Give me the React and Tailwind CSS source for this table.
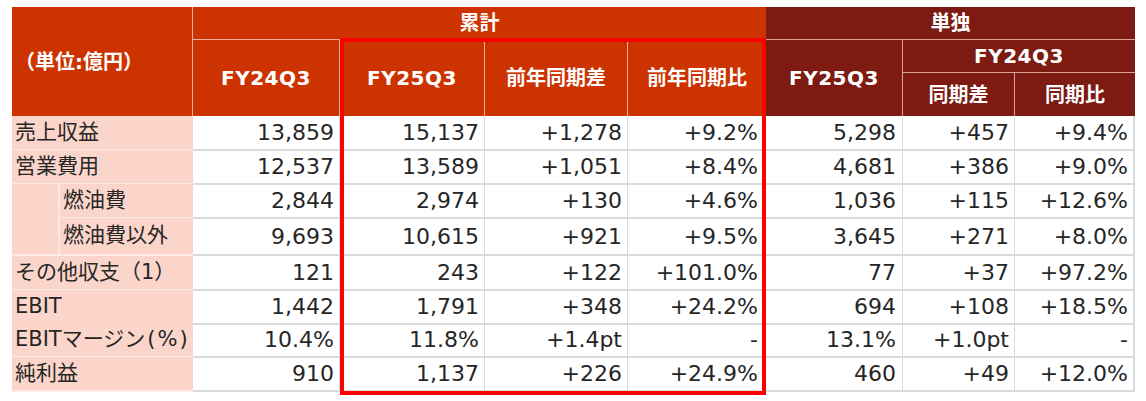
import React from "react";

const rows = [
  { label: "売上収益", sub: false, v: ["13,859", "15,137", "+1,278", "+9.2%", "5,298", "+457", "+9.4%"] },
  { label: "営業費用", sub: false, v: ["12,537", "13,589", "+1,051", "+8.4%", "4,681", "+386", "+9.0%"] },
  { label: "燃油費", sub: true, v: ["2,844", "2,974", "+130", "+4.6%", "1,036", "+115", "+12.6%"] },
  { label: "燃油費以外", sub: true, v: ["9,693", "10,615", "+921", "+9.5%", "3,645", "+271", "+8.0%"] },
  { label: "その他収支（1）", sub: false, v: ["121", "243", "+122", "+101.0%", "77", "+37", "+97.2%"] },
  { label: "EBIT", sub: false, v: ["1,442", "1,791", "+348", "+24.2%", "694", "+108", "+18.5%"] },
  { label: "EBITマージン", suffix: true, sub: false, v: ["10.4%", "11.8%", "+1.4pt", "-", "13.1%", "+1.0pt", "-"] },
  { label: "純利益", sub: false, v: ["910", "1,137", "+226", "+24.9%", "460", "+49", "+12.0%"] },
];

const rowHeights = [34, 34, 34, 38, 34, 33, 34, 34];

export default function App() {
  const font = { fontFamily: '"DejaVu Sans", "Noto Sans CJK JP", sans-serif' };
  const hdr = "flex items-center justify-center text-white font-bold text-[20px] leading-none";
  const cols = "grid-cols-[48px_133px_147px_145px_143px_138px_137px_112px_120px]";
  return (
    <div className="w-[1146px] h-[401px] bg-white relative overflow-hidden" style={font}>
      <div className="pl-[12px] pt-[7px]">
        {/* header */}
        <div className={`grid ${cols} grid-rows-[33px_33px_43px] w-[1123px]`}>
          <div className="col-start-1 col-span-2 row-start-1 row-span-3 bg-[#cc3300] border-r border-[#ecb09c] flex items-center pl-[3px] text-white font-bold text-[20px]">
            （単位:億円）
          </div>
          <div className={`col-start-3 col-span-4 row-start-1 bg-[#cc3300] border-b border-[#ecb09c] ${hdr}`}>累計</div>
          <div className={`col-start-3 row-start-2 row-span-2 bg-[#cc3300] border-r border-[#ecb09c] ${hdr} text-[19px] tracking-[0.5px]`}>FY24Q3</div>
          <div className={`col-start-4 row-start-2 row-span-2 bg-[#cc3300] border-r border-[#ecb09c] ${hdr} text-[19px] tracking-[0.5px]`}>FY25Q3</div>
          <div className={`col-start-5 row-start-2 row-span-2 bg-[#cc3300] border-r border-[#ecb09c] ${hdr}`}>前年同期差</div>
          <div className={`col-start-6 row-start-2 row-span-2 bg-[#cc3300] ${hdr}`}>前年同期比</div>
          <div className={`col-start-7 col-span-3 row-start-1 bg-[#7d1a12] border-b border-[#d9a49c] ${hdr}`}>単独</div>
          <div className={`col-start-7 row-start-2 row-span-2 bg-[#7d1a12] border-r border-[#d9a49c] ${hdr} text-[19px] tracking-[0.5px]`}>FY25Q3</div>
          <div className={`col-start-8 col-span-2 row-start-2 bg-[#7d1a12] border-b border-[#d9a49c] ${hdr} text-[19px] tracking-[0.5px]`}>FY24Q3</div>
          <div className={`col-start-8 row-start-3 bg-[#7d1a12] border-r border-[#d9a49c] ${hdr}`}>同期差</div>
          <div className={`col-start-9 row-start-3 bg-[#7d1a12] ${hdr}`}>同期比</div>
        </div>
        {/* body */}
        <div className="w-[1123px] flex flex-col">
          {rows.map((r, i) => (
            <div key={i} className={`grid ${cols}`} style={{ height: rowHeights[i] }}>
              {r.sub ? (
                <>
                  <div className={`bg-[#fbd5ca] border-r-2 border-[#fde9e3] ${i === 3 ? "border-b-2" : ""}`}></div>
                  <div className="bg-[#fbd5ca] border-b-2 border-[#fde9e3] flex items-center pl-[3px] text-[21px] text-[#262626]">{r.label}</div>
                </>
              ) : (
                <div className="col-span-2 bg-[#fbd5ca] border-b-2 border-[#fde9e3] flex items-center pl-[3px] text-[21px] text-[#262626] whitespace-nowrap">
                  {r.label}
                  {r.suffix && (
                    <span className="flex items-center">
                      <span className="pl-[2px]">(</span>
                      <span className="px-[2px]">%</span>
                      <span>)</span>
                    </span>
                  )}
                </div>
              )}
              {r.v.map((v, j) => (
                <div
                  key={j}
                  className={`border-b-2 border-[#dadada] flex items-center justify-end pr-[5px] text-[22px] text-[#262626] whitespace-nowrap ${j === 3 ? "pr-[8px]" : ""} ${j === 4 ? "pr-[6px]" : ""} ${j !== 3 ? "border-r" : ""} ${j === 6 ? "border-r-2" : ""}`}
                >
                  {v}
                </div>
              ))}
            </div>
          ))}
        </div>
      </div>
      <div className="absolute left-[340px] top-[38px] w-[426px] h-[357px] border-4 border-[#ff0000] pointer-events-none"></div>
    </div>
  );
}
